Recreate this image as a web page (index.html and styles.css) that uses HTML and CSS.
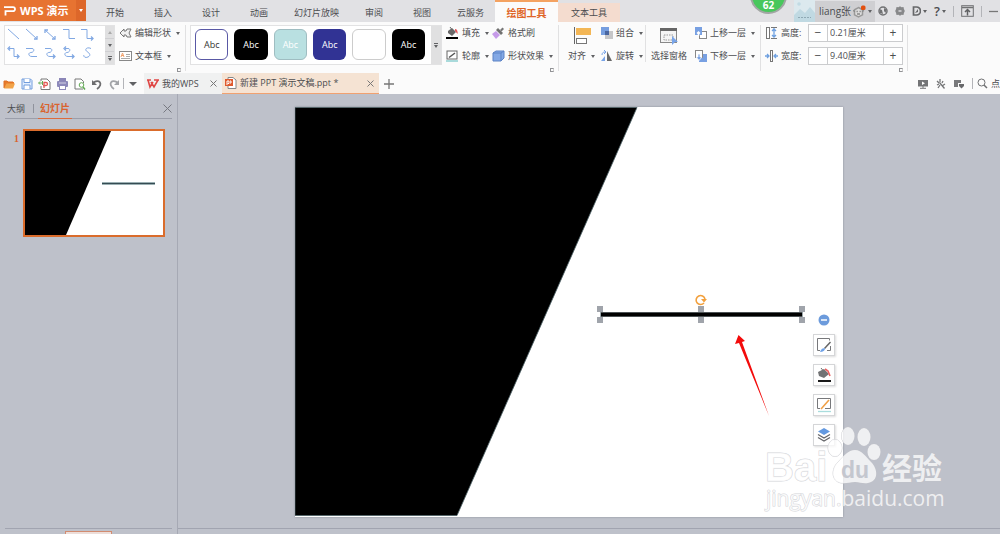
FILE: index.html
```html
<!DOCTYPE html>
<html lang="zh-CN">
<head>
<meta charset="utf-8">
<meta name="viewport" content="width=device-width, initial-scale=1">
<title>WPS 演示</title>
<link rel="stylesheet" href="styles.css">
</head>
<body>
<header class="titlebar">
  <button class="brand"><span class="brand-main"><svg width="12" height="10" viewBox="0 0 12 10"><path d="M0 1.2H9a2 2 0 0 1 2 2v0a2 2 0 0 1-2 2H1.500V9.500" fill="none" stroke="#fff" stroke-width="1.8"/></svg>WPS 演示</span><span class="brand-drop"><i class="caret light"></i></span></button>
  <nav class="tabs">
    <button class="tab">开始</button><button class="tab">插入</button><button class="tab">设计</button><button class="tab">动画</button><button class="tab">幻灯片放映</button><button class="tab">审阅</button><button class="tab">视图</button><button class="tab">云服务</button><button class="tab active">绘图工具</button><button class="tab context">文本工具</button>
  </nav>
  <div class="account">
    <div class="score">62</div>
    <svg class="avatar" width="21" height="22" viewBox="0 0 21 22"><rect width="21" height="22" fill="#dce9ee"/><circle cx="5" cy="4" r="1.800" fill="#c2dbe4"/><path d="M0 15L6 9l5 4 5-6 5 6v9H0z" fill="#c0d9e2"/><path d="M4 17.500h13" stroke="#8fa9b4" stroke-dasharray="2 1"/></svg>
    <button class="user">liang张<svg width="13" height="17" viewBox="0 0 13 17"><path d="M5.500 4.500l4 2.300v5L5.500 14l-4-2.200v-5z" fill="#ddd" stroke="#999" stroke-width="1.500"/><path d="M0 7.500l2 1M11 7.500l-2 1M3.500 8.500h1.300M6.500 8.500h1.300M4 11h3" stroke="#888" stroke-width="1.300"/><rect x="8" y="2.500" width="4.500" height="4.500" rx="1.500" fill="#e2500f"/></svg><i class="caret"></i></button>
    <button class="tool" aria-label="皮肤"><svg width="10" height="10" viewBox="0 0 10 10"><circle cx="5" cy="5" r="4" fill="none" stroke="#707173" stroke-width="1.500"/><path d="M1.500 3l2.500 1L5 8 2 7zM6 2l2.500 1.500-1 3.500L6 5z" fill="#707173"/></svg></button>
    <button class="tool" aria-label="设置"><svg width="10" height="10" viewBox="0 0 10 10"><path d="M5 .3l1.500 1 2-.2.4 1.900L9.800 5l-.9 2-.4 1.900-2-.2L5 9.700l-1.500-1-2 .2L1.100 7 .2 5l.9-2 .4-1.900 2 .2z" fill="#87888a"/><path d="M3.500 5h3" stroke="#d4d4d6" stroke-width="1.600"/></svg></button>
    <button class="tool" aria-label="文档"><svg width="9" height="10" viewBox="0 0 9 10"><path d="M1.500 1h3a4 4 0 0 1 0 8h-3z" fill="none" stroke="#67686a" stroke-width="1.700"/><path d="M3 7l3-4v3z" fill="#67686a"/></svg><i class="caret"></i></button>
    <button class="tool help" aria-label="帮助">?<i class="caret"></i></button>
    <i class="bar-line"></i>
    <button class="tool" aria-label="收起功能区"><svg width="13" height="12" viewBox="0 0 13 12"><rect x=".7" y=".7" width="11.600" height="10.600" fill="none" stroke="#707173"/><path d="M1 2.500h11" stroke="#707173" stroke-width="1.500"/><path d="M6.500 10.500V5M4 7l2.500-2.500L9 7" fill="none" stroke="#606163" stroke-width="1.500"/></svg></button>
    <i class="bar-line"></i>
    <button class="tool minimize" aria-label="最小化"><svg width="9" height="3" viewBox="0 0 9 3"><path d="M0 1.500h9" stroke="#777" stroke-width="1.300"/></svg></button>
  </div>
</header>

<section class="ribbon" aria-label="绘图工具">
  <div class="gallery shapes">
    <svg width="100" height="38" viewBox="0 0 100 38" fill="none" stroke="#81a8e3">
      <path d="M3 3l11 10M21 3l11 10M40 4l10 9M58 3.500h6v9h6M76 3.500h6v9h6M4 22.500h5v8h5M21 22.500h6c3 0 2 4-1 4s-3 4 1 4h5M40 22.500h5c3 0 2 4-1 4s-3 4 1 4h5M60 22.500h3c3 0 2 4-1 4s-3 4 1 4h6M86 22.500c-4-2-7 1-4 3s4 4 1 5.500-5-1-4-2"/>
      <path d="M29 13h3v-3M40 7V4h3M47 13h3v-3M86 10.500l2 2-2 2M5 20.500l-2 2 2 2M12 28.500l2 2-2 2M48 28.500l2 2-2 2M61 20.500l-2 2 2 2M67 28.500l2 2-2 2" stroke-width="1.300"/>
    </svg>
    <div class="scroller"><button aria-label="上一行"><i class="caret up"></i></button><button aria-label="下一行"><i class="caret"></i></button><button class="more" aria-label="更多形状"><i class="caret"></i></button></div>
  </div>
  <div class="group edit">
    <button class="command"><svg width="13" height="12" viewBox="0 0 13 12"><path d="M1 6l4-4v2h2l1-2h4l-2 4 2 4H8L7 8H5v2z" fill="#f1f1f1" stroke="#777"/></svg>编辑形状<i class="caret"></i></button>
    <button class="command"><svg width="13" height="12" viewBox="0 0 13 12"><rect x=".5" y="1.500" width="12" height="9" fill="#fff" stroke="#888"/><path d="M2 7l1.500-4L5 7M2.500 5.500h2" fill="none" stroke="#f0a06a"/><path d="M7 4.500h4M7 6.500h4M2 8.500h9" stroke="#aaa"/></svg>文本框<i class="caret"></i></button>
    <button class="launcher" aria-label="形状选项"></button>
  </div>
  <i class="divider"></i>
  <div class="gallery styles">
    <button class="swatch outline">Abc</button><button class="swatch black">Abc</button><button class="swatch teal">Abc</button><button class="swatch navy">Abc</button><button class="swatch blank" aria-label="白色样式"></button><button class="swatch black">Abc</button>
    <div class="scroller"><button class="more" aria-label="更多样式"><i class="caret"></i></button></div>
  </div>
  <div class="group two-columns">
    <button class="command"><svg width="13" height="12" viewBox="0 0 13 12"><path d="M2 4l4-3 4 4-4 4-4-3z" fill="#696969"/><path d="M4 0l3 4" stroke="#696969"/><path d="M9 2c2 0 3 2 2.500 5L9 4z" fill="#e5585c"/><path d="M0 11h12" stroke="#000" stroke-width="2"/></svg>填充<i class="caret"></i></button>
    <button class="command"><svg width="13" height="12" viewBox="0 0 13 12"><path d="M0 7l4-3 4 4-4 4z" fill="#c69be9"/><path d="M4 3l2-2 5 5-2 2z" fill="#707070"/><path d="M8 3l2.500-2.500L12 2 9.500 4.500z" fill="#777"/></svg>格式刷</button>
    <button class="command"><svg width="13" height="12" viewBox="0 0 13 12"><rect x="1" y="1" width="10" height="8" fill="#fff" stroke="#666"/><path d="M3 7.500L9 3" stroke="#555" stroke-width="1.500"/><path d="M0 11h12" stroke="#a9dadb" stroke-width="2"/></svg>轮廓<i class="caret"></i></button>
    <button class="command"><svg width="13" height="12" viewBox="0 0 13 12"><path d="M1 3l3-2h8v7l-3 3H1z" fill="#84a9e5" stroke="#5d83c5"/><path d="M1 3h8v8M9 3l3-2" fill="none" stroke="#5d83c5"/></svg>形状效果<i class="caret"></i></button>
    <button class="launcher" aria-label="样式选项"></button>
  </div>
  <i class="divider"></i>
  <button class="tall align"><svg width="18" height="18" viewBox="0 0 18 18"><path d="M1.500 0v17" stroke="#666"/><rect x="3" y="1" width="15" height="7" fill="#f3b655"/><rect x="3.500" y="11.500" width="10" height="5" fill="#fff" stroke="#777"/></svg><span>对齐<i class="caret"></i></span></button>
  <div class="group arrange">
    <button class="command"><svg width="13" height="12" viewBox="0 0 13 12"><rect x="5" y="4" width="8" height="8" fill="#c6c6c8"/><rect x="1" y="0" width="8" height="8" fill="#769edf"/><rect x="5" y="4" width="4" height="4" fill="#4a66a0"/></svg>组合<i class="caret"></i></button>
    <button class="command"><svg width="13" height="12" viewBox="0 0 13 12"><path d="M7 1l5 10H7z" fill="#686868"/><path d="M5 6v5H1z" fill="#78a4e8"/><path d="M2 5c0-2 1-3 3-3M4 0l2 2-2 2" fill="none" stroke="#78a4e8"/></svg>旋转<i class="caret"></i></button>
  </div>
  <i class="divider short"></i>
  <button class="tall"><svg width="20" height="18" viewBox="0 0 20 18"><rect x="1.500" y="1.500" width="16" height="14" fill="#f4f4f4" stroke="#888"/><path d="M1 2.500h17" stroke="#666" stroke-width="3"/><path d="M5 8h9v5H5z" fill="none" stroke="#999" stroke-dasharray="1.500 1"/><path d="M13 9l6 6h-3l-3 3z" fill="#78a4e8"/></svg><span>选择窗格</span></button>
  <div class="group layers">
    <button class="command"><svg width="13" height="12" viewBox="0 0 13 12"><rect x="5.500" y="4.500" width="7" height="7" fill="#fff" stroke="#888"/><path d="M1 0h7v8H1z" fill="#78a0e2"/><path d="M4.500 9V5M3 6.500L4.500 5 6 6.500" fill="none" stroke="#fff" stroke-width="1.500"/></svg>上移一层<i class="caret"></i></button>
    <button class="command"><svg width="13" height="12" viewBox="0 0 13 12"><rect x="5" y="4" width="8" height="8" fill="#78a0e2"/><rect x="1.500" y=".5" width="7" height="7" fill="#fff" stroke="#888"/><path d="M4 4h2v3h2L5 10.500 2 7h2z" fill="#78a0e2" stroke="#fff" stroke-width=".8"/></svg>下移一层<i class="caret"></i></button>
  </div>
  <i class="divider"></i>
  <div class="group size">
    <div class="measure"><svg width="13" height="12" viewBox="0 0 13 12"><rect x="1.500" y=".5" width="3" height="11" fill="#fff" stroke="#777"/><path d="M6 .5h6M6 11.500h6" stroke="#777"/><path d="M9 1v10M7 4l2-2 2 2M7 8l2 2 2-2" fill="none" stroke="#6ea0e0" stroke-width="1.300"/></svg><label for="height">高度:</label><div class="spin"><button aria-label="减小高度">−</button><input id="height" type="text" value="0.21厘米"><button aria-label="增大高度">+</button></div></div>
    <div class="measure"><svg width="13" height="12" viewBox="0 0 13 12"><rect x="5.500" y=".5" width="2" height="11" fill="#fff" stroke="#777"/><path d="M0 6h4M2 4l2 2-2 2M13 6H9M11 4L9 6l2 2" fill="none" stroke="#6ea0e0" stroke-width="1.300"/></svg><label for="width">宽度:</label><div class="spin"><button aria-label="减小宽度">−</button><input id="width" type="text" value="9.40厘米"><button aria-label="增大宽度">+</button></div></div>
    <button class="launcher" aria-label="大小选项"></button>
  </div>
  <i class="divider"></i>
</section>

<div class="filebar">
  <div class="quick">
    <button aria-label="打开"><svg width="13" height="12" viewBox="0 0 13 12"><path d="M1 10V3h3l1 1h6v2" fill="#e67b2c"/><path d="M1 10.500l2.500-5H12l-2 5z" fill="#f2a348"/><path d="M1 10V3h3l1 1h5" fill="none" stroke="#de7025"/></svg></button>
    <button aria-label="保存"><svg width="12" height="12" viewBox="0 0 12 12"><path d="M1 1h8.500L11 2.500V11H1z" fill="#e4efff" stroke="#719cdc"/><path d="M3 1v3.500h6V1M3 11V7h6v4" fill="#fff" stroke="#719cdc"/></svg></button>
    <button aria-label="输出为PDF"><svg width="13" height="12" viewBox="0 0 13 12"><path d="M3 3V1h6l3 3v7.500H3V8" fill="#fff" stroke="#777"/><path d="M6 10V4.500h2a1.300 1.300 0 0 1 0 3H5" fill="none" stroke="#e25a55" stroke-width="1.300"/><path d="M4.500 3v4M1 5h3M2 3.500L.5 5 2 6.500" stroke="#61a953" fill="none"/></svg></button>
    <button aria-label="打印"><svg width="13" height="12" viewBox="0 0 13 12"><rect x="3" y="0" width="7" height="4" fill="#8b86b7"/><rect x="1" y="3" width="11" height="6" rx="1" fill="#8d89ba"/><rect x="3.500" y="7.500" width="6" height="4" fill="#fff" stroke="#8d89ba"/><path d="M3 5h7" stroke="#d3d1e5"/></svg></button>
    <button aria-label="打印预览"><svg width="12" height="12" viewBox="0 0 12 12"><path d="M9 11H1V1h6l2.500 2.500V5" fill="#fff" stroke="#777"/><circle cx="7.500" cy="7" r="2.300" fill="#fff" stroke="#61a953"/><path d="M9 9l2 2.500" stroke="#61a953" stroke-width="1.500"/></svg></button>
    <button aria-label="撤销"><svg width="12" height="12" viewBox="0 0 12 12"><path d="M2 5c6-5 11 1 4 6" fill="none" stroke="#6d6d6f" stroke-width="1.800"/><path d="M1 2v5h5z" fill="#6d6d6f"/></svg></button>
    <button aria-label="恢复"><svg width="12" height="12" viewBox="0 0 12 12"><path d="M10 5C4 0-1 6 6 11" fill="none" stroke="#a2a4a8" stroke-width="1.800"/><path d="M11 2v5H6z" fill="#a2a4a8"/></svg></button>
    <i class="bar-line"></i>
    <button aria-label="自定义快速访问"><i class="caret big"></i></button>
  </div>
  <div class="file home"><svg width="12" height="10" viewBox="0 0 12 10"><path d="M0 1h4M1 1l2 7 3-5M4 3l3 5 4-7M7 1h5" fill="none" stroke="#df4644" stroke-width="1.600"/></svg><span>我的WPS</span><button aria-label="关闭我的WPS"><svg width="7" height="7" viewBox="0 0 7 7"><path d="M.5.5l6 6M6.500.5l-6 6" stroke="#777"/></svg></button></div>
  <div class="file current"><svg width="12" height="12" viewBox="0 0 12 12"><path d="M3 .5h5L11 3v8.500H3z" fill="#fff" stroke="#888"/><rect y="2" width="8" height="7" fill="#df5a2e"/><path d="M2 8V4h2v2.500H2.500M5 4h1v2H5" fill="none" stroke="#fff"/></svg><span>新建 PPT 演示文稿.ppt *</span><button aria-label="关闭文稿"><svg width="7" height="7" viewBox="0 0 7 7"><path d="M.5.5l6 6M6.500.5l-6 6" stroke="#777"/></svg></button></div>
  <button class="new" aria-label="新建文档"><svg width="10" height="10" viewBox="0 0 10 10"><path d="M5 0v10M0 5h10" stroke="#777" stroke-width="1.300"/></svg></button>
  <div class="finder">
    <button aria-label="放映"><svg width="10" height="10" viewBox="0 0 10 10"><path d="M0 1h10v6.500H0z" fill="#737476"/><path d="M4 2.500v3.500l3-1.700z" fill="#fff"/><path d="M2 9.300h6M5 7v2" stroke="#737476"/></svg></button>
    <button aria-label="动画效果"><svg width="10" height="10" viewBox="0 0 10 10"><path d="M4 0v3M1 2l2 2M7 2L6 4M1 6l2-1M3.500 3.500l5 6M2 9l2-3M6 7l3-2" stroke="#737476" stroke-width="1.300"/></svg></button>
    <button aria-label="选项"><svg width="10" height="10" viewBox="0 0 10 10"><path d="M0 1h7v3H4v4H0z" fill="#78797b"/><path d="M5 5h5v2L7.500 9.500 5 7z" fill="#68696b"/></svg></button>
    <i class="bar-line"></i>
    <button class="search"><svg width="11" height="11" viewBox="0 0 11 11"><circle cx="4.500" cy="4.500" r="3.500" fill="none" stroke="#707173"/><path d="M7 7l3 3" stroke="#707173" stroke-width="1.500"/></svg>点</button>
  </div>
</div>

<div class="workspace">
  <aside class="sidebar">
    <div class="side-tabs"><button>大纲</button><i class="bar-line dark"></i><button class="selected">幻灯片</button><button class="close" aria-label="关闭窗格"><svg width="9" height="9" viewBox="0 0 9 9"><path d="M.5.5l8 8M8.500.5l-8 8" stroke="#777981"/></svg></button></div>
    <div class="slides"><span class="number">1</span>
      <button class="thumb" aria-label="幻灯片 1"><svg viewBox="0 0 138 104" preserveAspectRatio="none"><path fill="#fff" d="M0 0h138v104H0z"/><path d="M0 0h86L41 104H0z"/><path d="M77 52.500h53" stroke="#a9c3c6" stroke-width="2.500"/><path d="M77 52.500h53" stroke="#354b52" stroke-width="1.500"/></svg></button>
    </div>
    <div class="side-foot"><i class="foot-tab"></i></div>
  </aside>
  <main class="stage">
    <div class="canvas">
      <div class="slide">
        <svg class="art" viewBox="0 0 548 410">
          <path fill="#fff" d="M0 0h548v410H0z"/><path d="M0 .5h342L162 408.500H0z" stroke="#4b6064" stroke-width=".8"/>
          <path d="M305 207.500h203" stroke="#9ba6aa" stroke-width="5"/><path d="M306 207.500h201" stroke="#000" stroke-width="4"/>
          <path d="M302 199h6v6h-6zM302 210h6v6h-6zM403 199h6v6h-6zM403 210h6v6h-6zM504 199h6v6h-6zM504 210h6v6h-6z" fill="#a0a4ab"/>
          <path d="M409 196a4.500 4.500 0 1 1 1-4" fill="none" stroke="#f2a03d" stroke-width="1.600"/><path d="M406 192h6l-3 3.500z" fill="#f2a03d"/>
          <path d="M443.500 228l6.500 6-3 1 27 74-30-73-4 1z" fill="#f30b0b"/>
        </svg>
        <div class="float-tools">
          <button class="collapse" aria-label="收起"><svg width="12" height="12" viewBox="0 0 12 12"><circle cx="6" cy="6" r="5.500" fill="#6c9bdc"/><path d="M3 6h6" stroke="#fff" stroke-width="1.500"/></svg></button>
          <button aria-label="形状样式"><svg width="16" height="16" viewBox="0 0 16 16"><path d="M4 13.500H1.500v-12h12v2M14.500 9v4.500H11" fill="none" stroke="#77787b"/><path d="M14.500 5L8.500 11.500" stroke="#666" stroke-width="1.500"/><path d="M4 15c1-3 3-4.500 5-3.500 0 2-2 3.500-5 3.500z" fill="#6fa2e8"/></svg></button>
          <button aria-label="形状填充"><svg width="16" height="16" viewBox="0 0 16 16"><path d="M2 5l6-3 5 5-5 4-5-2z" fill="#717274"/><path d="M5 1l4 5" stroke="#717274"/><path d="M9 2l3 2 2 5" fill="none" stroke="#ea6262" stroke-width="1.600"/><path d="M2 14h13" stroke="#000" stroke-width="1.800"/></svg></button>
          <button aria-label="形状轮廓"><svg width="16" height="16" viewBox="0 0 16 16"><path d="M4 11.500H1.500v-10h13v10H9" fill="none" stroke="#77787b"/><path d="M13 3l-8 9" stroke="#f0a047" stroke-width="1.600"/><path d="M2 14.500h13" stroke="#a9dddd" stroke-width="1.300"/></svg></button>
          <button aria-label="图层"><svg width="16" height="16" viewBox="0 0 16 16"><path d="M8 1l6 3.500L8 8 2 4.500z" fill="#6399e0"/><path d="M2 7.500L8 11l6-3.500M2 10.500L8 14l6-3.500" fill="none" stroke="#66676a" stroke-width="1.300"/></svg></button>
        </div>
        <svg class="watermark" viewBox="0 0 184 86" role="img" aria-label="Baidu 经验">
          <g class="mark"><ellipse cx="70" cy="20" rx="7" ry="8.500"/><ellipse cx="83" cy="8" rx="6.500" ry="9"/><ellipse cx="99" cy="9" rx="6.500" ry="9"/><ellipse cx="109" cy="24" rx="6.500" ry="8"/><path d="M90 22c7 0 11 7 16 12 7 7 8 19-3 21-5 1-8-1-13-1s-10 2-14 1c-10-2-10-14-3-21 6-6 10-12 17-12z"/></g>
          <g class="mark"><text class="latin" x="0" y="53">Bai</text><text class="hanzi" x="117" y="51">经验</text><text class="url" x="1" y="78">jingyan.baidu.com</text></g>
          <text class="du" x="76" y="50">du</text>
        </svg>
      </div>
    </div>
    <div class="notes-edge"></div>
  </main>
</div>
</body>
</html>
```

FILE: styles.css
```css
* { box-sizing: border-box; }
body {
  margin: 0;
  min-height: 100vh;
  display: flex;
  flex-direction: column;
  overflow-x: hidden;
  background: #bec1ca;
  color: #4c4d50;
  font: 9px/12px "Open Sans", "Noto Sans CJK SC", sans-serif;
}
button, input { font: inherit; color: inherit; margin: 0; padding: 0; border: 0; background: none; white-space: nowrap; }
svg { display: block; flex: none; }
i { flex: none; }
.caret { border: 2px solid transparent; border-top: 3px solid #606164; border-bottom: 0; }
.caret.light { border-top-color: #fff; }
.caret.up { border-top: 0; border-bottom: 3px solid #aaa; }
.caret.big { border-width: 4px 4px 0; }
.bar-line { width: 1px; height: 11px; background: #b3b4b8; }
.bar-line.dark { height: 9px; background: #8f929c; }

.titlebar { display: flex; height: 22px; background: #e1e1e4; }
.brand { display: flex; width: 86px; height: 21px; background: #e77331; color: #fff; font-size: 11px; font-weight: 700; }
.brand-main { display: flex; flex: 1; align-items: center; gap: 4px; height: 100%; padding-left: 4px; }
.brand-drop { display: flex; align-items: center; justify-content: center; width: 10px; height: 100%; background: #dd672a; }
.tabs { display: flex; padding-left: 5px; }
.tab { min-width: 48px; padding: 4px 11px 0; }
.tab.active { min-width: 63px; border-top: 2px solid #f4a261; background: #fbfbfb; color: #df6528; font-size: 10px; font-weight: 700; padding-top: 2px; }
.tab.context { min-width: 62px; margin-top: 3px; padding-top: 1px; background: #f4dccf; }
.account { display: flex; align-items: center; margin-left: auto; gap: 7px; position: relative; }
.score { position: absolute; left: -44px; top: -23px; width: 37px; height: 37px; padding-top: 20px; border: 2px solid #a1a6a3; border-radius: 50%; background: #48c75c; color: #fff; font-weight: 700; text-align: center; font-size: 10px; }
.avatar { margin-right: -7px; }
.user { display: flex; align-items: center; gap: 2px; height: 21px; margin-right: -4px; padding: 0 3px 0 4px; background: #cfcfd2; font-size: 10px; }
.tool { display: flex; align-items: center; gap: 2px; }
.help { font-size: 13px; font-weight: 600; }
.minimize { width: 11px; }

.ribbon { display: flex; height: 51px; padding-left: 4px; background: #fbfbfb; }
.gallery { display: flex; height: 40px; margin-top: 3px; border: 1px solid #e2e2e3; background: #fff; }
.shapes { width: 111px; margin-right: 4px; }
.scroller { display: flex; flex-direction: column; width: 10px; margin-left: auto; background: #cfcfd2; gap: 1px; }
.scroller button { display: flex; flex: 1; flex-direction: column; align-items: center; justify-content: center; gap: 1px; background: #e0e0e1; }
.more::before { content: ""; width: 4px; height: 1px; background: #606164; }
.styles { width: 252px; gap: 6px; padding-left: 4px; margin-right: 4px; }
.swatch { width: 34px; height: 31px; margin-top: 3px; border-radius: 6px; color: #fff; }
.outline { border: 1px solid #5958a5; background: #fff; color: #333; }
.black { background: #000; }
.teal { background: #b9e0e1; border: 1px solid #9fbdc1; }
.navy { background: #313394; }
.blank { background: #fff; border: 1px solid #ccc; }
.group { display: grid; grid-template-rows: 22px 22px 5px; row-gap: 1px; align-items: center; align-content: start; }
.command { display: flex; align-items: center; gap: 3px; }
.command .caret, .tall .caret { margin-left: 2px; }
.launcher { grid-row: 3; grid-column: -2; justify-self: end; align-self: start; width: 4px; height: 4px; border: 1px solid #929396; border-right-color: #ccc; }
.two-columns { grid-template-columns: 46px 62px; }
.edit, .layers { width: 62px; }
.arrange { width: 44px; margin-left: 5px; }
.divider { width: 1px; height: 46px; margin: 3px 4px 0; background: #e1e1e2; }
.short { height: 37px; margin: 3px 5px 0 1px; }
.tall { display: grid; grid-template-rows: 16px 22px; row-gap: 1px; padding-top: 6px; justify-items: center; align-content: start; align-items: center; }
.tall span { display: flex; align-items: center; gap: 3px; }
.align { margin-left: 5px; }
.layers { margin-left: 7px; }
.size { width: 138px; }
.measure { display: flex; align-items: center; gap: 3px; }
.spin { display: flex; width: 95px; height: 18px; margin-left: auto; border: 1px solid #cbccce; background: #fff; }
.spin button { width: 18px; font-size: 12px; }
.spin input { flex: 1; min-width: 0; padding-left: 2px; border: solid #cbccce; border-width: 0 1px; }

.filebar { display: flex; height: 21px; background: #fbfbfb; overflow: hidden; }
.quick { display: flex; align-items: center; gap: 5px; padding-left: 3px; width: 144px; }
.quick button { display: flex; }
.quick .bar-line { margin-left: -2px; }
.file { display: flex; align-items: center; gap: 3px; padding: 0 5px 0 3px; background: #f0f1f1; }
.file button { display: flex; margin-left: auto; }
.home { width: 78px; }
.current { width: 157px; background: #f5e3d3; border-bottom: 1px solid #f0a170; }
.new { padding: 0 5px; }
.finder { display: flex; align-items: center; gap: 8px; margin-left: auto; }
.search { display: flex; align-items: center; gap: 3px; margin-left: -4px; }

.workspace { display: flex; flex: 1; }
.sidebar { display: flex; flex-direction: column; width: 178px; border-right: 1px solid #a6a9b4; padding: 0 5px; }
.side-tabs { display: flex; align-items: center; gap: 6px; height: 25px; padding-top: 2px; border-bottom: 1px solid #9b9eaa; }
.side-tabs button { height: 23px; padding: 3px 2px 0; }
.side-tabs .bar-line { margin-top: 3px; }
.side-tabs .selected { margin-left: -2px; border-bottom: 1px solid #dd6b3c; color: #d9632e; font-size: 10px; font-weight: 700; }
.side-tabs .close { margin-left: auto; padding-right: 0; }
.slides { display: flex; gap: 4px; padding: 10px 7px 0 9px; }
.number { margin-top: 4px; width: 5px; color: #d9632e; font: 700 10px/12px "Liberation Serif", serif; }
.thumb { flex: 1; border: 2px solid #da6c2c; }
.thumb svg { width: 100%; }
.side-foot { margin-top: auto; height: 6px; padding: 2px 0 0 60px; border-top: 1px solid #a1a4b0; }
.foot-tab { display: block; width: 47px; height: 3px; border: 1px solid #d28c70; border-bottom: 0; background: #ecdeda; }
.stage { display: flex; flex: 1; flex-direction: column; min-width: 0; }
.canvas { flex: 1; padding: 13px 157px 11px 117px; }
.slide { position: relative; box-shadow: 0 0 2px #878b96; }
.art { width: 100%; }
.float-tools { position: absolute; right: 8px; top: 207px; display: flex; flex-direction: column; align-items: center; gap: 8px; }
.float-tools button { display: grid; place-items: center; width: 22px; height: 22px; border: 1px solid #d5d6d8; background: #fff; box-shadow: 1px 1px 2px #ddd; }
.float-tools .collapse { height: 12px; border: 0; background: none; box-shadow: none; }
.watermark { position: absolute; right: -106px; bottom: 3px; width: 184px; height: 86px; overflow: visible; }
.mark { fill: #fff; fill-opacity: .75; stroke: #c0c2c8; stroke-width: 1; stroke-opacity: .7; paint-order: stroke; }
.latin { font: 700 40px "Liberation Sans", sans-serif; }
.hanzi { font: 700 30px "Noto Sans CJK SC", sans-serif; }
.url { font: 21px "Open Sans", sans-serif; }
.du { font: 700 23px "Liberation Sans", sans-serif; fill: #c4c7cf; }
.notes-edge { height: 6px; border-top: 1px solid #a1a4b0; }
```
